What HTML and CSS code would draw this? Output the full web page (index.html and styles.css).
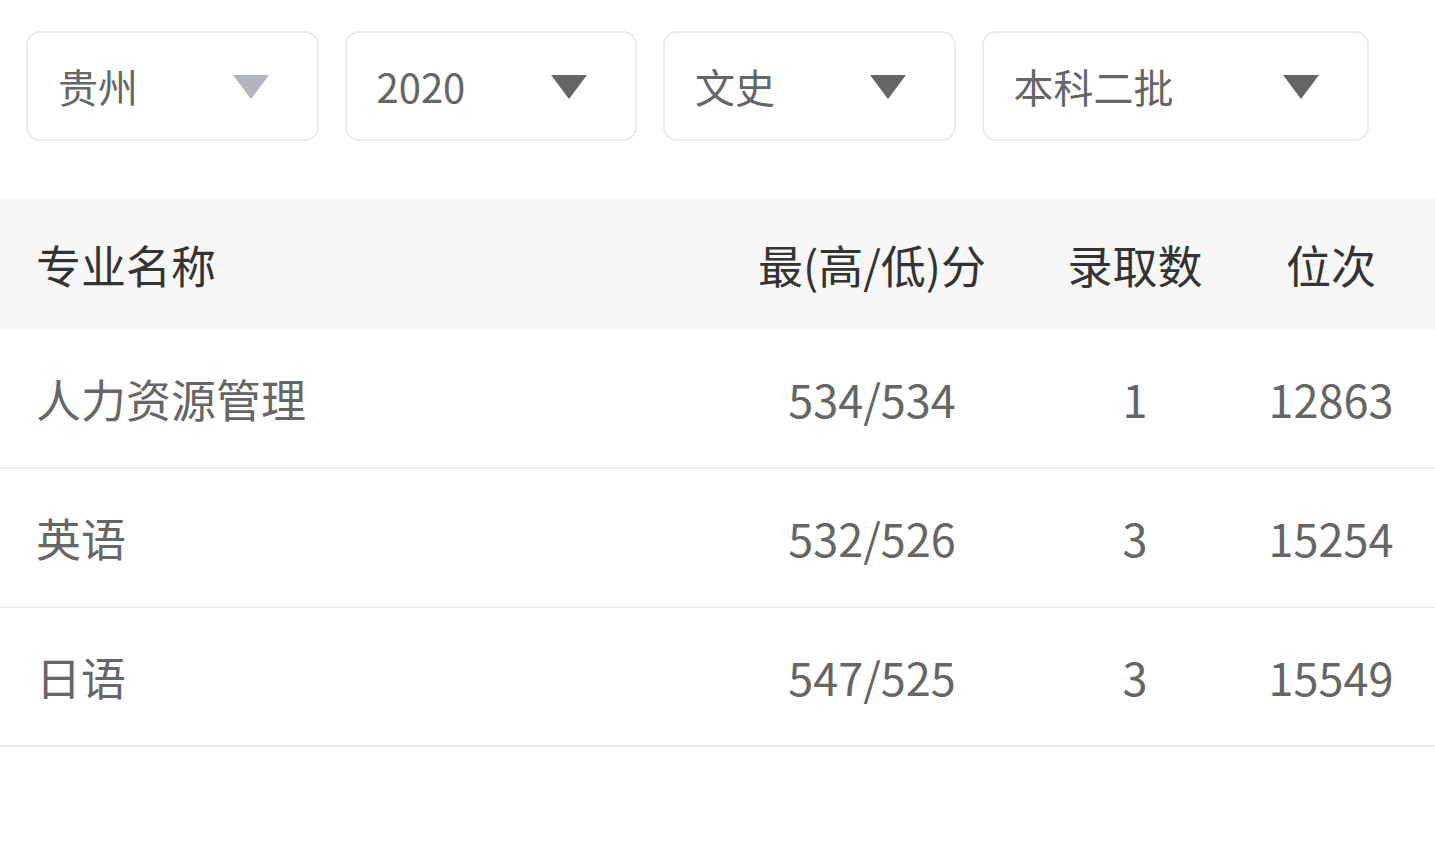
FILE: index.html
```html
<!DOCTYPE html>
<html lang="zh-CN">
<head>
<meta charset="utf-8">
<title>录取分数</title>
<link rel="stylesheet" href="styles.css">
</head>
<body>
<div class="filters">
  <div class="select w1"><span class="label">贵州</span><svg class="caret light" viewBox="0 0 36 24"><path d="M0 0H36L18 24Z"/></svg></div>
  <div class="select w1"><span class="label">2020</span><svg class="caret" viewBox="0 0 36 24"><path d="M0 0H36L18 24Z"/></svg></div>
  <div class="select w1"><span class="label">文史</span><svg class="caret" viewBox="0 0 36 24"><path d="M0 0H36L18 24Z"/></svg></div>
  <div class="select w2"><span class="label">本科二批</span><svg class="caret" viewBox="0 0 36 24"><path d="M0 0H36L18 24Z"/></svg></div>
</div>
<div class="table">
  <div class="row head">
    <div class="cell name">专业名称</div>
    <div class="cell">最(高/低)分</div>
    <div class="cell">录取数</div>
    <div class="cell">位次</div>
  </div>
  <div class="row">
    <div class="cell name">人力资源管理</div>
    <div class="cell">534/534</div>
    <div class="cell">1</div>
    <div class="cell">12863</div>
  </div>
  <div class="row">
    <div class="cell name">英语</div>
    <div class="cell">532/526</div>
    <div class="cell">3</div>
    <div class="cell">15254</div>
  </div>
  <div class="row">
    <div class="cell name">日语</div>
    <div class="cell">547/525</div>
    <div class="cell">3</div>
    <div class="cell">15549</div>
  </div>
</div>
</body>
</html>
```
FILE: styles.css
```css
* { box-sizing: border-box; }
html, body {
  margin: 0;
  padding: 0;
  background: #fff;
  font-family: "Noto Sans CJK SC", "Noto Sans", sans-serif;
}
.filters {
  display: flex;
  gap: 26px;
  padding: 31px 0 0 26px;
}
.select {
  height: 110px;
  border: 2px solid #ececec;
  border-radius: 14px;
  display: flex;
  align-items: center;
  justify-content: space-between;
  padding: 0 48px 0 30px;
  background: #fff;
}
.w1 { width: 292.5px; }
.w2 { width: 387px; }
.label {
  font-size: 40px;
  color: #666;
  line-height: 1;
}
.caret {
  width: 36px;
  height: 24px;
  fill: #666;
  margin-top: 2px;
}
.caret.light { fill: #b1b5bd; }
.table {
  margin-top: 57px;
}
.row {
  display: grid;
  grid-template-columns: 1fr 342px 184px 208px;
  align-items: center;
  height: 139px;
  border-bottom: 2px solid #ececec;
  font-size: 45px;
  color: #666;
}
.row.head {
  height: 132px;
  background: #f7f7f7;
  border-bottom: none;
  color: #333;
}
.cell {
  text-align: center;
  white-space: nowrap;
  line-height: 1;
}
.cell.name {
  text-align: left;
  padding-left: 36px;
}
```
